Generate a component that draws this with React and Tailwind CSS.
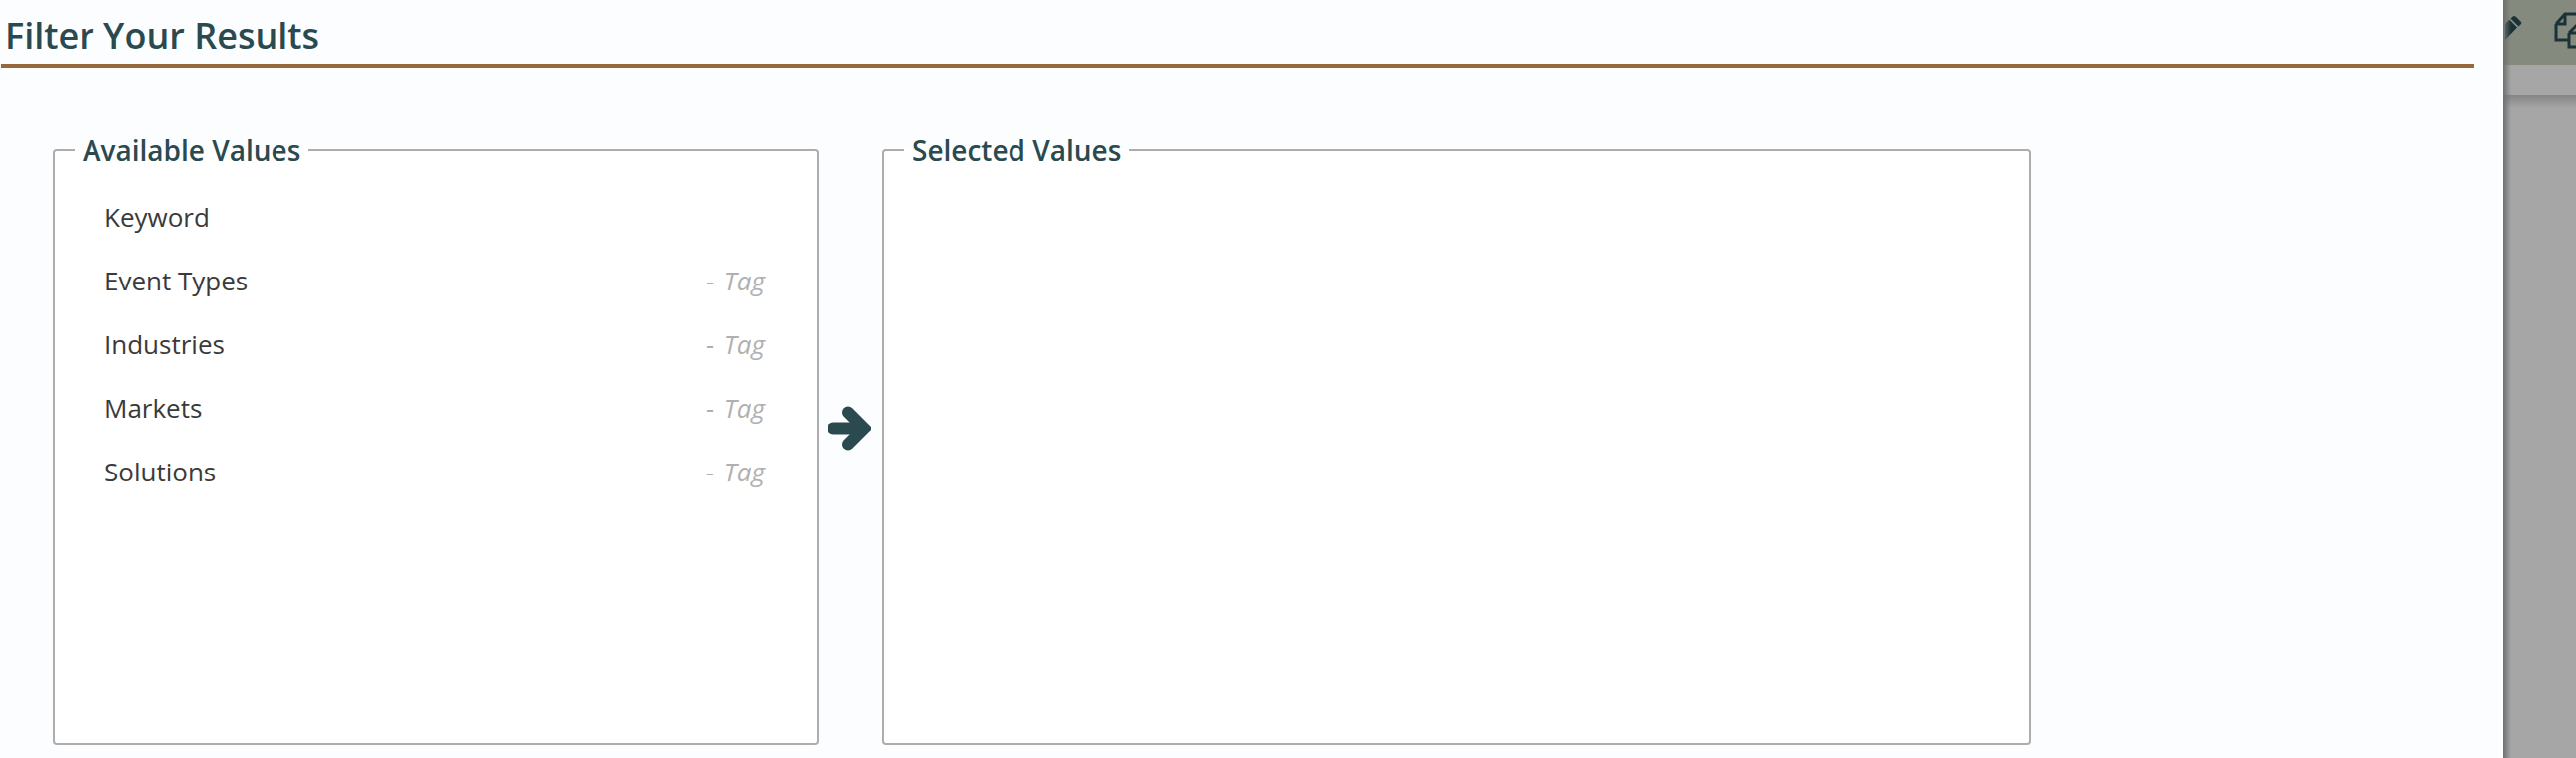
import React from "react";

const rows = [
  { name: "Keyword" },
  { name: "Event Types", tag: true },
  { name: "Industries", tag: true },
  { name: "Markets", tag: true },
  { name: "Solutions", tag: true },
];

function Box({ title, className, children }) {
  return (
    <fieldset className={"h-[616px] rounded-[4px] border-2 border-[#adadad] bg-white " + className}>
      <legend className="ml-[20px] px-[8px] text-[28px] leading-[36px] font-semibold text-[#2b4a50]">{title}</legend>
      {children}
    </fieldset>
  );
}

function ValueRow({ name, tag }) {
  return (
    <div className="flex h-[64px] items-center justify-between">
      <span className="text-[26px] text-[#3a3a3a]">{name}</span>
      {tag && <span className="text-[26px] italic [word-spacing:3px] text-[#b0b0b0]">- Tag</span>}
    </div>
  );
}

function Drawer() {
  return (
    <aside className="relative h-full w-[73px] overflow-hidden bg-[#a6a6a6]">
      <div className="flex h-[65px] items-center bg-[#858a7e] pl-[2px] text-[#1b3338]">
        <svg width="18" height="26" viewBox="0 0 18 26" className="mb-[7px] shrink-0" fill="currentColor">
          <path d="M0 8 L4.3 3.8 L12 11.5 L0 24 Z" />
          <path d="M8.5 0 Q10 0 11 1 L16 6 Q16.5 7 16 8 L13.5 10.5 L5.5 2.5 Z" />
        </svg>
        <svg width="42" height="38" viewBox="0 0 42 38" className="mb-[3px] ml-[31px] shrink-0" fill="none" stroke="currentColor" strokeWidth="3">
          <path d="M2 12 L11 2 H24 M2 12 V28 H15 M11 2 V12 H2" />
          <path d="M15 21 L24 12 M15 21 V35 H24 M15 21 H24" />
        </svg>
      </div>
      <div className="h-[30px]" />
      <div className="h-[14px] bg-gradient-to-b from-[#828282] to-[#a6a6a6]" />
      <div className="absolute inset-y-0 left-0 w-[8px] bg-gradient-to-r from-[#6f6f6f] to-transparent" />
    </aside>
  );
}

export default function App() {
  return (
    <div className="flex h-screen overflow-hidden bg-[#fcfdff] font-['Open_Sans',sans-serif]">
      <main className="w-[2517px] shrink-0">
        <div className="w-[2487px]">
          <h1 className="ml-[2px] h-[64px] pl-[3px] pt-[14px] text-[36px] leading-[44px] font-semibold text-[#2b4a50]">Filter Your Results</h1>
          <div className="ml-[1px] h-[4px] bg-[#96683b]" />
        </div>
        <div className="mt-[65px] ml-[53px] flex items-center">
          <Box title="Available Values" className="w-[770px]">
            <div className="pl-[50px] pr-[52px] pt-[17px]">
              {rows.map((r) => (
                <ValueRow key={r.name} name={r.name} tag={r.tag} />
              ))}
            </div>
          </Box>
          <div className="mb-[21px] flex w-[64px] justify-center pr-[2px]">
            <svg width="44" height="45" viewBox="0 0 44 45" fill="none" stroke="#2b4a50" strokeWidth="12">
              <path d="M6 22.5 H34" strokeLinecap="round" />
              <path d="M21 6.5 L37 22.5 L21 38.5" strokeLinecap="round" strokeLinejoin="miter" />
            </svg>
          </div>
          <Box title="Selected Values" className="w-[1155px]" />
        </div>
      </main>
      <Drawer />
    </div>
  );
}
